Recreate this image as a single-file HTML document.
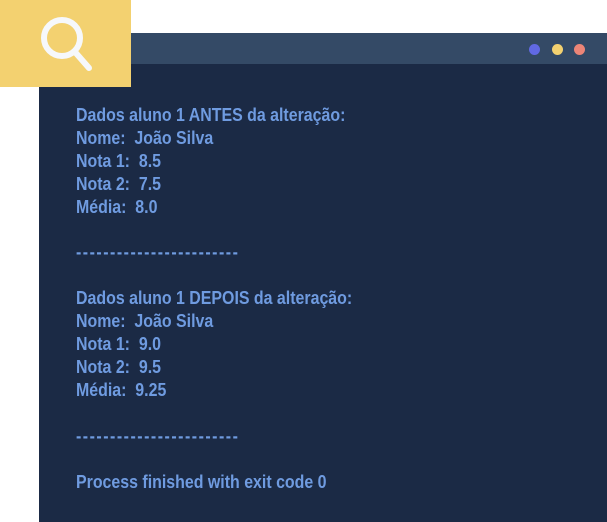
<!DOCTYPE html>
<html><head><meta charset="utf-8"><style>
body{margin:0;width:607px;height:522px;background:#fff;position:relative;overflow:hidden}
.hdr{position:absolute;left:39px;top:33px;width:568px;height:31px;background:#344a66}
.body{position:absolute;left:39px;top:64px;width:568px;height:458px;background:#1b2a45}
.dot{position:absolute;top:44px;width:11px;height:11px;border-radius:50%}
.sq{position:absolute;left:0;top:0;width:131px;height:87px;background:#f3d170}
.txt{position:absolute;left:76px;top:104px;font-family:"Liberation Sans",sans-serif;font-weight:bold;font-size:18px;line-height:22.9px;color:#6f9be0;white-space:pre;transform:scaleX(0.885);transform-origin:0 0}
.d{letter-spacing:1.7px}
</style></head><body>
<div class="hdr"></div><div class="body"></div>
<div class="dot" style="left:529px;background:#6169e3"></div>
<div class="dot" style="left:552px;background:#f3d170"></div>
<div class="dot" style="left:574px;background:#ec8577"></div>
<div class="sq"></div>
<svg style="position:absolute;left:0;top:0" width="131" height="87"><circle cx="62" cy="38" r="18" fill="none" stroke="#f6f8fb" stroke-width="6"/><line x1="75" y1="52" x2="89" y2="68" stroke="#f6f8fb" stroke-width="6" stroke-linecap="round"/></svg>
<div class="txt">Dados aluno 1 ANTES da alteração:
Nome:  João Silva
Nota 1:  8.5
Nota 2:  7.5
Média:  8.0

<span class="d">------------------------</span>

Dados aluno 1 DEPOIS da alteração:
Nome:  João Silva
Nota 1:  9.0
Nota 2:  9.5
Média:  9.25

<span class="d">------------------------</span>

Process finished with exit code 0</div>
</body></html>
